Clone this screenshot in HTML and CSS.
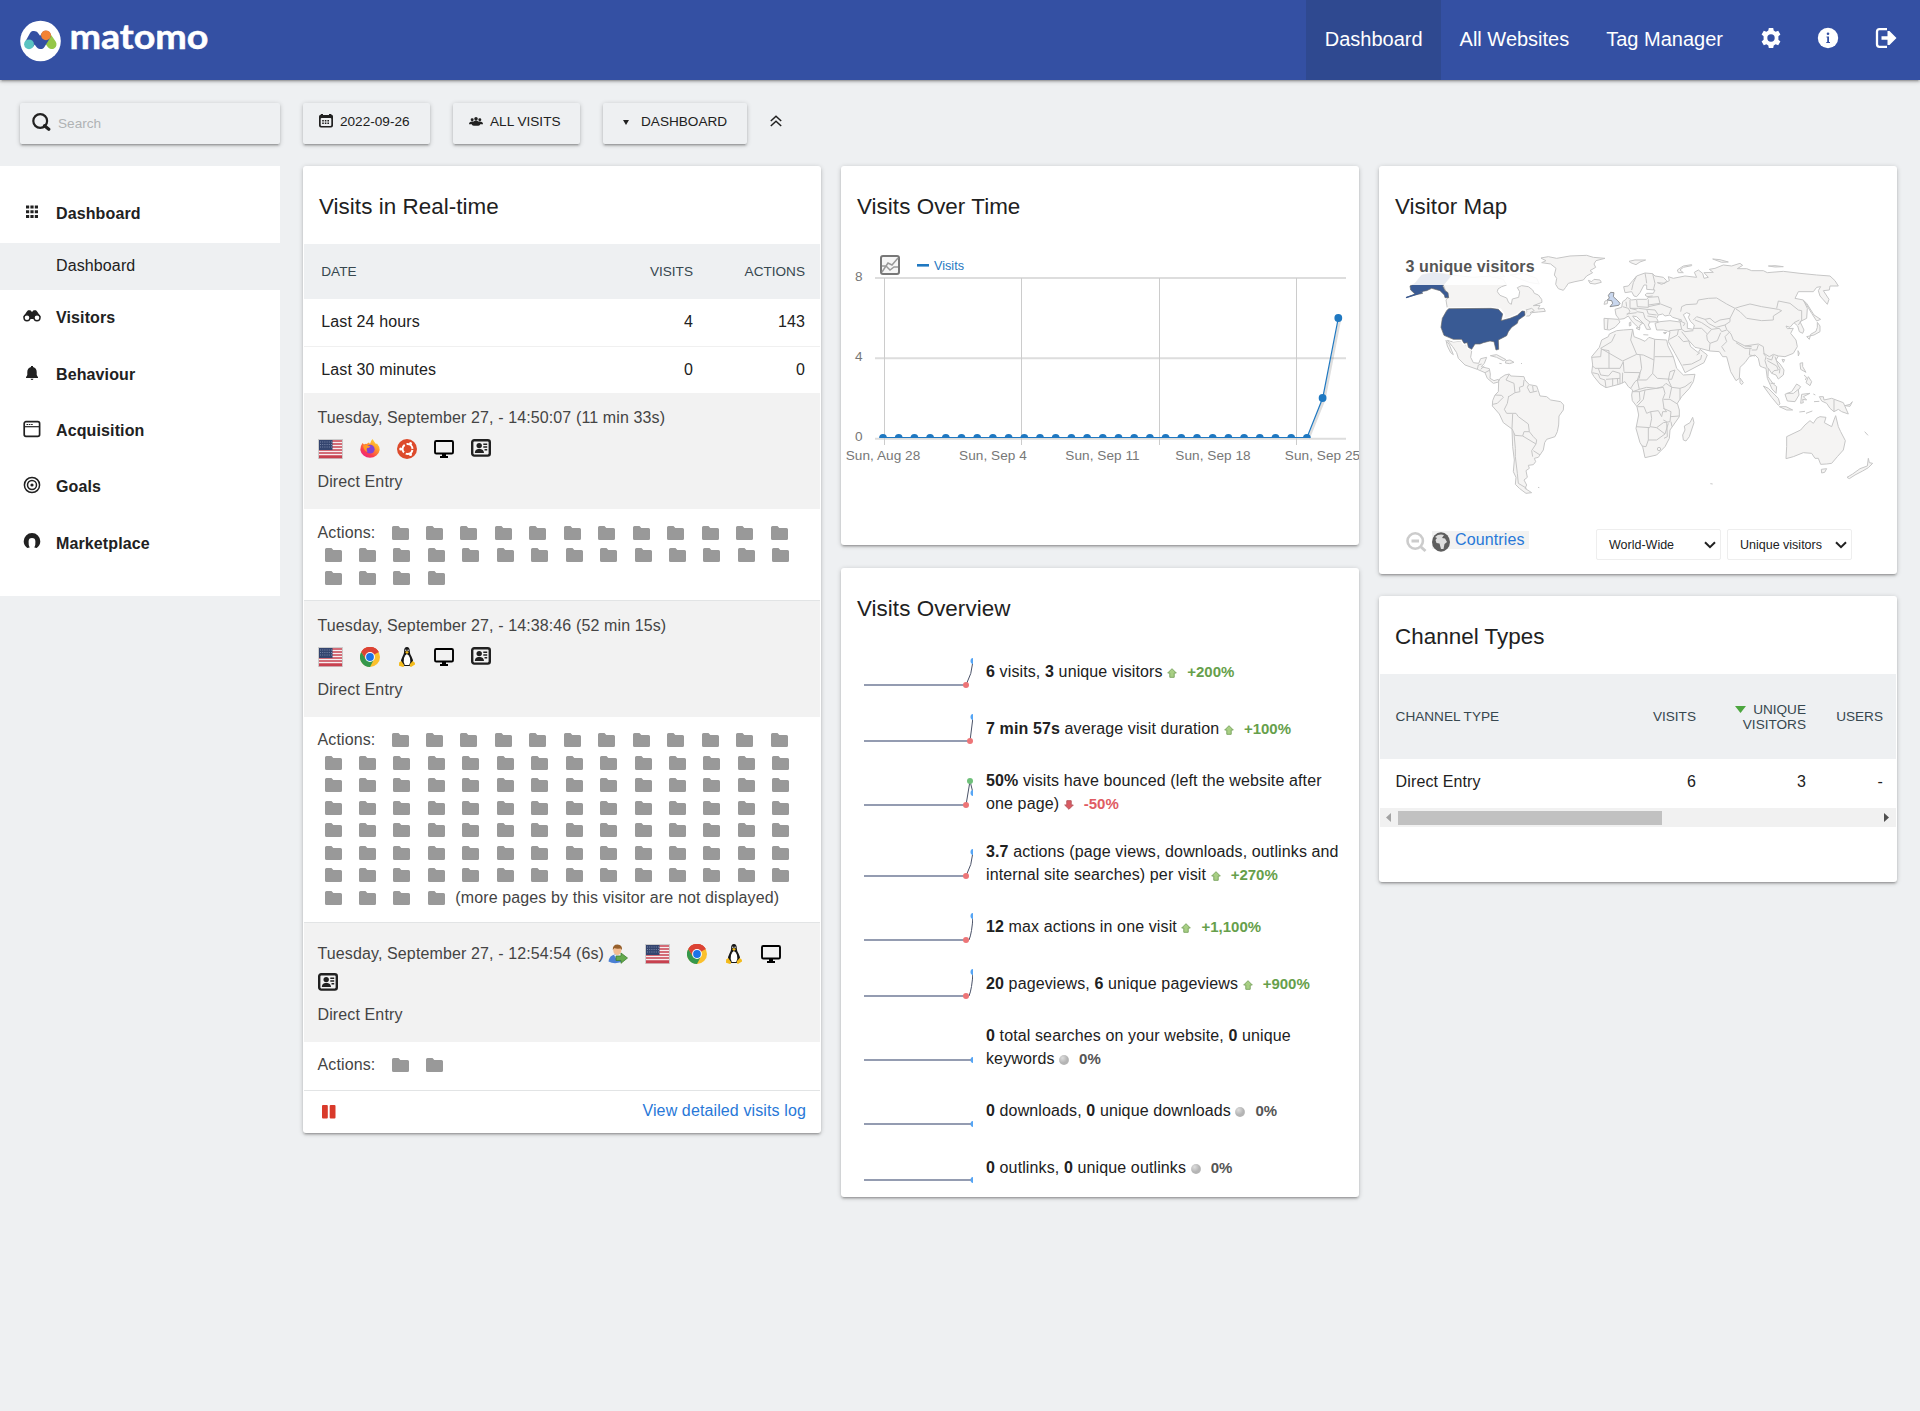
FILE: index.html
```html
<!DOCTYPE html>
<html lang="en">
<head>
<meta charset="utf-8">
<title>Dashboard - Matomo</title>
<link rel="stylesheet" href="styles.css">
</head>
<body>
<svg class="defs" width="0" height="0" aria-hidden="true">
  <defs>
    <linearGradient id="ffx" x1=".9" y1="0" x2=".2" y2="1"><stop offset="0" stop-color="#ffe43a"/><stop offset=".4" stop-color="#ff9a2a"/><stop offset=".75" stop-color="#fb3c50"/><stop offset="1" stop-color="#e8208a"/></linearGradient>
    <radialGradient id="gr" cx=".35" cy=".3"><stop offset="0" stop-color="#ddd"/><stop offset="1" stop-color="#b4b4b4"/></radialGradient>
    <symbol id="i-folder" viewBox="0 0 17 14"><path d="M1.5 0H6.5L8.3 2H15.5Q17 2 17 3.500V12.500Q17 14 15.500 14H1.500Q0 14 0 12.500V1.500Q0 0 1.500 0Z" fill="#999"/></symbol>
    <symbol id="i-flag" viewBox="0 0 25 20"><rect width="25" height="20" fill="#ccc"/><rect x="1" y="1" width="23" height="18" fill="#f7eef0"/><path d="M1 2H24M1 5H24M1 8H24M1 11H24M1 14H24M1 17H24M1 18.500H24" stroke="#c8414f" stroke-width="1.300"/><rect x="1" y="1" width="13.500" height="10" fill="#34456f"/><path d="M2 3H14M2 5.500H14M2 8H14" stroke="#8d99b8" stroke-width=".8" stroke-dasharray="1 1.200"/></symbol>
    <symbol id="i-firefox" viewBox="0 0 20 20"><path d="M2.500 4L4 5.500Q5.500 4.500 7 5Q7.500 3.500 9 3.500L10 5Q10.500 2 12.500 0Q14 2.500 16 5L17 4.500Q20 8 19.700 11A9.800 9 0 0 1 .3 11Q.2 7 2.500 4Z" fill="url(#ffx)"/><circle cx="10.200" cy="10.200" r="4.400" fill="#8243d4"/><path d="M3 6.500Q6 5 10.500 7.500Q9 9 7 9Q6 11 7.500 13Q4 12 3 6.500Z" fill="#ff9a22"/></symbol>
    <symbol id="i-ubuntu" viewBox="0 0 20 20"><circle cx="10" cy="10" r="10" fill="#dd4b2c"/><circle cx="10.500" cy="10" r="5" fill="none" stroke="#fff" stroke-width="2" stroke-dasharray="8.500 2"  stroke-dashoffset="-1"/><circle cx="3.700" cy="10" r="1.500" fill="#fff"/><circle cx="13.500" cy="4.400" r="1.500" fill="#fff"/><circle cx="13.500" cy="15.600" r="1.500" fill="#fff"/></symbol>
    <symbol id="i-chrome" viewBox="0 0 20 20"><circle cx="10" cy="10" r="10" fill="#fbc02d"/><path d="M10 10L1.300 5A10 10 0 0 1 18.700 5Z" fill="#dc4335"/><path d="M10 10L14 12.300L10 20A10 10 0 0 1 1.300 5L6 12.300Z" fill="#35984c"/><path d="M9.500 5.300H18.900L18.700 5A10 10 0 0 0 1.300 5L5.700 12Z" fill="#dc4335"/><circle cx="10" cy="10" r="4.900" fill="#fff"/><circle cx="10" cy="10" r="3.900" fill="#1a73e8"/></symbol>
    <symbol id="i-tux" viewBox="0 0 17 20"><path d="M8.500 0Q5.300 0 5.600 5Q5.500 7 4 9.500Q2 13 2.500 16L6 19H11L14.500 16Q15 13 13 9.500Q11.300 7 11.300 4.500Q11.300 0 8.500 0Z" fill="#161616"/><path d="M8.400 7Q6.500 8 5.500 11Q4.500 15 6.300 18H10.700Q12.500 15 11.500 11Q10.500 8 8.400 7Z" fill="#fff"/><path d="M6.500 5L8.400 4L10.500 5L8.500 7Z" fill="#f3bb1c"/><path d="M.6 15.500L2.800 14L5.500 18Q6 20 4.500 20L.5 18.800ZM16.400 15.800L14.200 14L11.500 17Q11 20 12.500 20L16.500 17.500Z" fill="#f3bb1c"/><circle cx="7.300" cy="3.300" r=".7" fill="#eee"/><circle cx="9.600" cy="3.300" r=".7" fill="#eee"/></symbol>
    <symbol id="i-monitor" viewBox="0 0 20 18"><rect x="1" y="1" width="18" height="12.500" rx="1.300" fill="none" stroke="#000" stroke-width="1.900"/><path d="M8 13H12V16H14V18H6V16H8Z"/></symbol>
    <symbol id="i-card" viewBox="0 0 20 18"><rect x="1.200" y="1.200" width="17.600" height="15.400" rx="2" fill="none" stroke="#212121" stroke-width="2.400"/><circle cx="8.200" cy="6.600" r="2.700" fill="#212121"/><path d="M3.800 14Q4 10.500 7 10H9.500Q12.800 10.500 13 14Z" fill="#212121"/><path d="M12.300 5.200H16.200M12.300 8H16.200M13.500 10.800H16.200" stroke="#212121" stroke-width="1.400"/></symbol>
    <symbol id="i-returning" viewBox="0 0 20 20"><path d="M.5 17.500Q1.500 11 7 10.500Q13 11 13.500 18Q6 20.500 .5 17.500Z" fill="#4a7fd4"/><path d="M6 11L8.500 15L12 11Z" fill="#dfeafa"/><ellipse cx="9.300" cy="6.500" rx="4" ry="4.600" fill="#f2bd92"/><path d="M4.800 6Q4.500 .5 9.500 .5Q14.500 .8 14 6L12.500 4.500Q8 5 6.500 4Z" fill="#97602c"/><path d="M8 12H13V9L19.500 14L13 19.300V16.500H8Z" fill="#63a94c" stroke="#3f8030" stroke-width=".8"/></symbol>
    <symbol id="i-up" viewBox="0 0 10 10"><path d="M5 .7L9.300 5H7.200V9.300H2.800V5H.7Z" fill="#a8cf84" stroke="#7fa865" stroke-width="1"/></symbol>
    <symbol id="i-down" viewBox="0 0 10 10"><path d="M5 9.300L.7 5H2.800V.7H7.200V5H9.300Z" fill="#da5b63" stroke="#b85a60" stroke-width="1"/></symbol>
    <symbol id="i-same" viewBox="0 0 10 10"><circle cx="5" cy="5" r="4.900" fill="url(#gr)"/></symbol>
    <symbol id="i-chev" viewBox="0 0 12 8"><path d="M1 1.200L6 6.200L11 1.200" fill="none" stroke="#212121" stroke-width="2"/></symbol>
  </defs>
</svg>

<header class="header">
  <a class="logo">
    <svg width="200" height="80" viewBox="0 0 200 80">
      <circle cx="20.500" cy="41" r="20.300" fill="#fff"/>
      <path d="M26 36L31.700 44.300" stroke="#95c748" stroke-width="9.600" stroke-linecap="round"/>
      <path d="M10 43L14 35.700L20.500 44.300L26 35.500" fill="none" stroke="#3450a3" stroke-width="9.600" stroke-linecap="round" stroke-linejoin="round"/>
      <circle cx="9" cy="44.300" r="4.900" fill="#5bc4c1"/>
      <circle cx="26" cy="35.300" r="4.900" fill="#f38334"/>
      <text class="wordmark" x="49.500" y="48.600" textLength="139" lengthAdjust="spacingAndGlyphs">matomo</text>
    </svg>
  </a>
  <nav class="topnav">
    <a class="navlink active">Dashboard</a>
    <a class="navlink">All Websites</a>
    <a class="navlink">Tag Manager</a>
    <a class="navicon"><svg width="22" height="22" viewBox="0 0 22 22"><path d="M8.800 1H13.200L13.700 3.600L15.600 4.700L18.200 3.800L20.400 7.500L18.400 9.300V12.700L20.400 14.500L18.200 18.200L15.600 17.300L13.700 18.400L13.200 21H8.800L8.300 18.400L6.400 17.300L3.800 18.200L1.600 14.500L3.600 12.700V9.300L1.600 7.500L3.800 3.800L6.400 4.700L8.300 3.600Z" fill="#fff"/><circle cx="11" cy="11" r="3.700" fill="#3450a3"/></svg></a>
    <a class="navicon"><svg width="22" height="22" viewBox="0 0 22 22"><circle cx="11" cy="11" r="10.200" fill="#fff"/><circle cx="11" cy="6.800" r="1.300" fill="#3450a3"/><path d="M9.500 9.500H12V15H13V16H9.300V15H10.200V10.500H9.500Z" fill="#3450a3"/></svg></a>
    <a class="navicon"><svg width="22" height="22" viewBox="0 0 22 22"><path d="M12 2.200H4.500Q2 2.200 2 4.700V17.300Q2 19.800 4.500 19.800H12" fill="none" stroke="#fff" stroke-width="2.300"/><path d="M6.500 9.300H12.500V4H14.500L21.500 11L14.500 18H12.500V12.700H6.500Z" fill="#fff"/></svg></a>
  </nav>
</header>

<div class="toolbar">
  <div class="search"><svg width="19" height="19" viewBox="0 0 19 19"><circle cx="8.200" cy="8" r="6.900" fill="none" stroke="#212121" stroke-width="2.200"/><path d="M12.500 12.800L16.800 16.300" stroke="#212121" stroke-width="3.200" stroke-linecap="round"/></svg><span>Search</span></div>
  <div class="tool tool-date"><svg width="14" height="15" viewBox="0 0 14 15"><path d="M2 1.500V1H4V2H10V1H12V1.500H12.500Q14 2 14 3.500V12.500Q14 14.500 12 14.500H2Q0 14.500 0 12.500V3.500Q0 2 2 1.500Z" fill="#212121"/><rect x="1.700" y="5" width="10.600" height="8" rx="1" fill="#eef0f2"/><path d="M3.200 7.700H11M3.200 10.300H11" stroke="#212121" stroke-width="1.400" stroke-dasharray="1.600 1"/></svg><span>2022-09-26</span></div>
  <div class="tool"><svg width="14" height="11" viewBox="0 0 15 11"><circle cx="3.400" cy="3.500" r="1.600"/><circle cx="11.600" cy="3.500" r="1.600"/><circle cx="7.500" cy="2.500" r="1.900"/><path d="M0 8.500Q0 5.500 3.500 5.500H5L6.500 4.500H8.500L10 5.500H11.500Q15 5.500 15 8.500H12Q12 10 10 10H5Q3 10 3 8.500Z"/></svg><span>ALL VISITS</span></div>
  <div class="tool tool-dash"><svg width="6" height="5" viewBox="0 0 6 5"><path d="M0 0H6L3 5Z"/></svg><span>DASHBOARD</span></div>
  <svg class="collapse" width="12" height="12" viewBox="0 0 12 12"><path d="M.8 6L6 1.200L11.200 6M.8 11L6 6.200L11.200 11" fill="none" stroke="#212121" stroke-width="1.500"/></svg>
</div>

<div class="page">
  <aside class="sidebar">
    <a class="item first"><svg width="18" height="18" viewBox="0 0 18 18"><path d="M3 4H15M3 8.700H15M3 13.400H15" stroke="#212121" stroke-width="3" stroke-dasharray="3.200 1.200"/></svg>Dashboard</a>
    <a class="sub">Dashboard</a>
    <a class="item"><svg width="18" height="18" viewBox="0 0 18 18"><path d="M3.500 5L5 3.200H7.500L8.200 4.500H9.800L10.500 3.200H13L14.500 5L17.700 10L14 14L11 12H7L4 14L.3 10Z" fill="#212121"/><circle cx="4" cy="10.700" r="3" fill="#fff" stroke="#212121" stroke-width="1.400"/><circle cx="14" cy="10.700" r="3" fill="#fff" stroke="#212121" stroke-width="1.400"/></svg>Visitors</a>
    <a class="item"><svg width="18" height="18" viewBox="0 0 18 18"><path d="M8 3V2H10V3Q13.700 4 13.700 8V11L15 13.300V14H3V13.300L4.300 11V8Q4.300 4 8 3ZM7.500 14.800H10.500Q10 16 9 16Q8 16 7.500 14.800Z" fill="#212121"/></svg>Behaviour</a>
    <a class="item"><svg width="18" height="18" viewBox="0 0 18 18"><rect x="1.200" y="1.700" width="15.400" height="14.600" rx="1.800" fill="none" stroke="#212121" stroke-width="1.700"/><path d="M1 6.700H17" stroke="#212121" stroke-width="1.200"/><path d="M3.500 4.500H10" stroke="#212121" stroke-width="1.100" stroke-dasharray="1.600 .7"/></svg>Acquisition</a>
    <a class="item"><svg width="18" height="18" viewBox="0 0 18 18"><g fill="none" stroke="#212121" stroke-width="1.500"><circle cx="9" cy="9" r="7.600"/><circle cx="9" cy="9" r="4.500"/></g><circle cx="9" cy="9" r="1.600" fill="#212121"/></svg>Goals</a>
    <a class="item"><svg width="18" height="18" viewBox="0 0 18 18"><path d="M4.300 16Q.7 13.500 .7 9.300A8.300 8.300 0 0 1 17.300 9.300Q17.300 13.500 13.700 16L11.300 15.500Q12.700 13 12.400 9.500A3.400 3.400 0 0 0 5.600 9.500Q5.300 13 6.700 15.500Z" fill="#212121"/></svg>Marketplace</a>
  </aside>

  <main class="widgets">
    <div class="column">
      <section class="card">
        <h2>Visits in Real-time</h2>
        <div class="inner">
          <table class="rt">
            <thead><tr><th>DATE</th><th>VISITS</th><th>ACTIONS</th></tr></thead>
            <tbody><tr><td>Last 24 hours</td><td>4</td><td>143</td></tr><tr><td>Last 30 minutes</td><td>0</td><td>0</td></tr></tbody>
          </table>
          <div class="visit">
            <div>Tuesday, September 27, - 14:50:07 (11 min 33s)</div>
            <div class="icons"><svg class="flag"><use href="#i-flag"/></svg><svg class="ic"><use href="#i-firefox"/></svg><svg class="ic"><use href="#i-ubuntu"/></svg><svg class="mon"><use href="#i-monitor"/></svg><svg class="mon id"><use href="#i-card"/></svg></div>
            <div>Direct Entry</div>
          </div>
          <div class="actions" data-folders="30">Actions:&nbsp; </div>
          <div class="visit second">
            <div>Tuesday, September 27, - 14:38:46 (52 min 15s)</div>
            <div class="icons"><svg class="flag"><use href="#i-flag"/></svg><svg class="ic"><use href="#i-chrome"/></svg><svg class="ic"><use href="#i-tux"/></svg><svg class="mon"><use href="#i-monitor"/></svg><svg class="mon id"><use href="#i-card"/></svg></div>
            <div>Direct Entry</div>
          </div>
          <div class="actions long" data-folders="100" data-note="(more pages by this visitor are not displayed)">Actions:&nbsp; </div>
          <div class="visit third">
            <div class="icons"><span>Tuesday, September 27, - 12:54:54 (6s)</span><svg class="ic ret"><use href="#i-returning"/></svg><svg class="flag"><use href="#i-flag"/></svg><svg class="ic"><use href="#i-chrome"/></svg><svg class="ic"><use href="#i-tux"/></svg><svg class="mon"><use href="#i-monitor"/></svg></div>
            <div class="icons"><svg class="mon"><use href="#i-card"/></svg></div>
            <div>Direct Entry</div>
          </div>
          <div class="actions last" data-folders="2">Actions:&nbsp; </div>
          <div class="foot"><svg width="14" height="14" viewBox="0 0 14 14"><rect width="5.800" height="13.500" rx="1" fill="#d93a2b"/><rect x="7.700" width="5.800" height="13.500" rx="1" fill="#d93a2b"/></svg><a>View detailed visits log</a></div>
        </div>
      </section>
    </div>

    <div class="column">
      <section class="card">
        <h2>Visits Over Time</h2>
        <svg class="chart" id="chart" width="518" height="301" viewBox="841 244 518 301">
          <rect x="881" y="256" width="18" height="18" rx="2" fill="#f6f6f6" stroke="#777" stroke-width="2"/>
          <path d="M882 272L888 263L892 265L898 258M882 266L886 266L890 270L894 267L898 267" fill="none" stroke="#999" stroke-width="1.500"/>
          <path d="M917 265.300H929" stroke="#1f78c1" stroke-width="2.600"/>
          <text class="legend" x="934" y="270.300" textLength="30" lengthAdjust="spacingAndGlyphs">Visits</text>
          <path d="M875 278H1346M875 358.300H1346M875 438.800H1346" stroke="#ddd" stroke-width="2"/>
          <path d="M884.500 278V445M1021.500 278V445M1159.500 278V445M1296.500 278V445" stroke="#ccc"/>
          <g class="axis" text-anchor="end"><text x="862.500" y="281">8</text><text x="862.500" y="361.300">4</text><text x="862.500" y="441.300">0</text></g>
          <g class="axis" text-anchor="middle"><text x="883" y="460">Sun, Aug 28</text><text x="993" y="460">Sun, Sep 4</text><text x="1102.500" y="460">Sun, Sep 11</text><text x="1213" y="460">Sun, Sep 18</text><text x="1322.500" y="460">Sun, Sep 25</text></g>
          <path d="M1308.500 438L1324 399.500L1339.700 319.500" fill="none" stroke="#000" stroke-opacity=".13" stroke-width="3"/>
          <path d="M883 437.500H1307L1322.700 398L1338.300 318" fill="none" stroke="#1f78c1" stroke-width="1.200"/>
        </svg>
      </section>
      <section class="card overview">
        <h2>Visits Overview</h2>
        <div class="rows">
          <div class="row" data-spark="s6"><p><b>6</b> visits, <b>3</b> unique visitors <svg class="ev"><use href="#i-up"/></svg><b class="up">+200%</b></p></div>
          <div class="row" data-spark="s7"><p><b>7 min 57s</b> average visit duration <svg class="ev"><use href="#i-up"/></svg><b class="up">+100%</b></p></div>
          <div class="row two" data-spark="bounce"><p><b>50%</b> visits have bounced (left the website after one page) <svg class="ev"><use href="#i-down"/></svg><b class="down">-50%</b></p></div>
          <div class="row two" data-spark="s6"><p><b>3.7</b> actions (page views, downloads, outlinks and internal site searches) per visit <svg class="ev"><use href="#i-up"/></svg><b class="up">+270%</b></p></div>
          <div class="row" data-spark="steep"><p><b>12</b> max actions in one visit <svg class="ev"><use href="#i-up"/></svg><b class="up">+1,100%</b></p></div>
          <div class="row" data-spark="steep"><p><b>20</b> pageviews, <b>6</b> unique pageviews <svg class="ev"><use href="#i-up"/></svg><b class="up">+900%</b></p></div>
          <div class="row two" data-spark="flat"><p><b>0</b> total searches on your website, <b>0</b> unique keywords <svg class="ev"><use href="#i-same"/></svg><b class="same">0%</b></p></div>
          <div class="row" data-spark="flat"><p><b>0</b> downloads, <b>0</b> unique downloads <svg class="ev"><use href="#i-same"/></svg><b class="same">0%</b></p></div>
          <div class="row" data-spark="flat"><p><b>0</b> outlinks, <b>0</b> unique outlinks <svg class="ev"><use href="#i-same"/></svg><b class="same">0%</b></p></div>
        </div>
      </section>
    </div>

    <div class="column">
      <section class="card mapcard">
        <h2>Visitor Map</h2>
        <svg class="map" width="518" height="285" viewBox="1379 244 518 285">
          <g transform="translate(1390 240) scale(.33333)" fill="#f5f4f3" stroke="#c6c6c6" stroke-width="3" stroke-linejoin="round">
            <path d="M452 54L475 50 500 55 540 48 590 46 610 52 645 55 618 62 612 72 617 82 600 92 608 98 590 108 580 120 555 125 535 130 527 142 520 151 505 146 497 133 500 115 493 105 498 85 482 72 455 68 468 62z"/>
            <path d="M595 121L605 125 612 118 630 120 634 127 615 132 600 130zM717 64L735 60 767 60 750 66 738 74 722 68z"/>
            <path d="M172 205L168 180 175 172 160 135 185 105 250 112 300 108 340 118 350 135 335 140 324 147 322 155 330 166 350 174 356 188 364 193 367 177 386 172 389 155 382 143 395 137 415 140 428 150 433 160 445 165 455 178 456 187 430 197 450 196 444 207 462 205 466 214 445 216 425 218 418 228 405 228 412 210 398 213 385 228 360 235 332 242 338 225 330 210 303 205z"/>
            <path d="M360 105L400 100 440 115 448 132 420 128zM290 98L330 95 345 110 305 112zM408 210L425 205 433 212 420 218"/>
            <path d="M172 301L190 306 215 303 230 318 245 333 242 352 250 368 266 370 272 356 290 352 283 370 274 380 298 386 301 402 300 415 312 422 325 418 326 426 310 430 292 415 285 398 262 388 225 375 205 355 200 338 188 320zM168 301L178 314 190 344 182 338 172 318zM262 388L265 375 275 372M272 388L283 378M285 398L300 390"/>
            <path d="M301 347L320 344 348 359 340 362 320 352zM348 362L360 360 372 367 358 371 346 369zM328 370L335 371M393 370L396 371"/>
            <path d="M326 425L330 415 345 405 358 402 362 408 402 410 405 420 418 434 440 438 445 452 450 468 470 470 482 480 512 485 521 495 520 510 507 528 506 555 502 575 495 590 470 598 464 608 460 630 445 652 433 655 437 665 430 674 415 676 418 685 408 692 412 712 402 720 410 735 405 745 425 758 408 760 388 745 376 733 378 712 370 695 373 660 368 620 366 567 340 548 328 522 307 498 308 482 315 465 325 455z"/>
            <path fill="none" d="M372 580L376 625 376 650 382 700 385 730 410 745M358 402L348 420 372 430 375 458 M356 468L352 490 343 508 350 520 378 520 385 530 415 552 418 575 402 575 398 588 375 586 366 566 368 522M402 420L400 438 388 442 390 455 375 458 356 470M416 434L412 442 420 458 442 453M428 438L430 455M315 465L335 466 340 472 322 490 308 493M398 588L438 612 440 600 430 590 418 575M438 612L425 632 428 650M430 632L450 645"/>
            <path d="M444 742L448 743M645 183L653 181 652 191 642 193z"/>
            <path d="M658 282L680 272 700 270 728 268 732 290 750 297 765 304 777 292 795 298 830 300 834 318 850 350 860 385 880 405 915 403 910 425 898 445 875 470 862 490 868 510 868 530 840 570 838 595 825 620 800 645 765 653 758 620 750 608 738 565 746 525 741 500 727 482 725 465 728 450 715 440 705 425 690 432 668 438 648 443 630 432 612 410 605 398 608 375 605 350 628 322 635 300 655 290z"/>
            <path fill="none" d="M676 282L665 305 632 325 698 363 740 343 722 300 728 268M605 352L632 350 634 328 657 332 657 385 615 385 608 378M740 343L760 345 792 360 794 298M794 350L850 350M657 385L690 385 700 365 702 395M750 345L755 385 742 420 748 448 728 455M702 397L750 398 748 415 735 425 722 445M607 398L625 402 630 415 645 420 648 443M625 385L632 405 655 408 668 393 690 400 690 432M668 415L668 438M648 418L690 415M682 415L684 435M697 430L698 398M792 360L788 400 802 415 845 418 855 390M742 420L770 420 788 400M748 448L770 442 800 445 818 440 828 430 845 442 870 445 885 440 905 425M855 390L840 395 835 420 845 442M728 455L748 455 750 480 740 490M748 455L765 450 760 478 740 500M765 450L820 442 825 460 818 478 822 505 830 515 818 515 815 530 805 512 782 515M743 500L762 500 770 520 782 515 785 535 780 560 800 563 820 548 840 545 843 515 820 505M738 560L780 563M775 563L775 600 768 620 755 618M775 600L800 600 825 582 800 563M825 582L835 550M820 478L840 478 862 492M845 442L838 475M870 445L870 478M842 530L868 528M820 540L830 545 832 590 822 595M843 545L846 560"/>
            <circle cx="807" cy="627" r="5"/>
            <path d="M908 532L912 548 898 590 888 603 880 600 878 585 885 570 883 558 900 548z"/>
          </g>
          <g transform="translate(1630 240) scale(.33333)" fill="#f5f4f3" stroke="#c6c6c6" stroke-width="3" stroke-linejoin="round">
            <path d="M-19 140L-5 138 8 122 20 108 45 99 68 101 75 108 100 112 110 122 105 130 82 128 95 133 118 122 115 110 130 115 165 108 200 112 193 97 205 90 218 100 222 115 235 112 222 98 250 97 238 88 255 85 280 75 305 78 330 70 338 76 322 86 350 86 365 92 400 92 412 98 460 94 510 100 560 105 600 108 615 122 625 138 600 138 598 150 580 152 597 178 592 193 570 168 565 152 572 140 560 142 550 155 505 155 495 175 520 180 532 205 530 235 510 245 522 270 518 280 508 275 503 258 492 248 480 262 468 258 472 266 490 265 482 280 498 300 502 320 490 340 465 350 445 348 438 360 450 372 462 390 460 405 445 417 438 405 425 400 415 385 414 410 430 432 440 440 438 460 426 447 412 415 408 385 398 382 390 378 385 355 375 345 358 350 345 368 330 382 328 415 318 422 302 395 290 350 278 350 268 335 240 333 210 325 195 322 175 300 182 320 205 338 210 328 232 345 222 368 165 398 157 380 135 340 115 305 120 275 100 270 80 270 75 250 90 245 120 242 150 246 155 240 128 232 120 225 105 228 98 222 85 225 80 235 85 245 60 246 55 255 62 268 50 268 42 252 20 230 8 228 15 238 38 250 30 255 28 265 20 258 5 243 -5 228 -18 236 -32 238 -42 225 -45 208 -25 202 -22 185 -12 178 -8 172 5 180 20 178 50 178 55 172 45 165 50 160 70 160 75 150 50 148 50 135 42 135 30 158 20 170 12 168 5 155 -15 158z"/>
            <path d="M-78 235L-35 238 -30 246 -45 262 -62 270 -77 268zM-66 237L-68 268M-2 248L2 246 3 256-2 258zM18 264L30 262 28 270zM100 278L110 277 105 282zM40 284L55 285"/>
            <path fill="none" d="M20 108L10 128 5 150M45 99L48 115 50 130M68 101L75 130 70 150M-22 200L-5 205 0 215-10 225M0 180L0 205 20 210M20 180L22 200 55 202 55 178M55 172L85 170 90 190 55 195M55 200L92 192 125 205 118 222M0 205L25 205 50 208 55 222 80 225M50 208L75 210 85 225M20 215L40 218 45 235M-10 222L20 218M52 228L78 232M45 235L60 246M-12 185L-10 200M50 170L68 168M152 215L155 200 168 194 200 192 205 180 235 175 260 174 290 192 315 205 300 235 270 240 255 248 240 235 225 238 200 230 190 240M315 205L330 200 360 192 395 200 445 208 455 212 430 228 430 240 395 242 350 235 330 215 318 207M440 205L445 183 480 190 505 210 515 212 515 240 505 255M300 235L300 245 285 255 290 268 303 282 310 300 345 318 385 312 400 320 402 340 418 350 430 343 445 348M300 275L285 290 290 305 275 320 285 335M230 285L245 268 268 265 275 275 290 270M230 285L232 300 240 310 238 332M240 310L262 302 272 278M190 265L215 265 232 282M195 240L215 248 245 268M225 238L235 250 258 262 285 255M118 272L155 268 165 275 190 272M155 268L150 245M145 240L165 250 160 258M145 270L142 285 118 298M145 288L160 305 175 303M155 275L175 300M158 375L185 372 212 358 215 345M210 338L200 345M318 308L345 325 365 325M345 318L365 320M360 325L358 345 375 348M365 330L380 330 385 315M400 340L408 350 405 362 412 385M410 355L425 360 430 345M412 362L440 378 445 390 432 392 425 400M435 350L445 378 450 385 448 400M422 430L435 430M492 248L508 240"/>
            <path fill="#fff" d="M160 224L170 218 180 222 175 232 182 245 193 255 190 268 172 265 172 248z"/>
            <path d="M185 74L160 78 142 90 145 98 160 98 150 90 160 82 185 77zM248 57L270 59 295 66 275 67zM415 78L435 77 460 80 435 81zM520 181L530 190 552 225 572 238 560 243 545 220 530 195zM562 247L570 258 570 275 552 285 530 290 538 298 542 283 558 274 562 262zM504 332L508 340 505 348zM456 358L464 359 460 367zM330 414L340 428 335 434 330 428zM510 370L518 368 518 380 528 397 512 388zM535 410L545 425 540 437 528 428zM522 405L530 412 526 420M400 438L415 445 445 475 450 492 445 496 425 472zM448 500L468 500 488 510 470 510zM465 463L485 455 500 432 512 440 505 450 507 465 495 485 472 483zM470 460L490 460 505 448M515 463L540 460 520 470 530 480 518 478 520 488 512 490zM508 516L525 514M528 520L547 513M550 462L556 465M552 485L568 484M568 470L580 470 582 480 605 475 640 488 655 522 635 515 625 508 612 515 600 505 590 490 575 483zM612 480V515M645 497L660 493 667 485 660 499zM704 575L714 586"/>
            <path d="M470 590L495 578 512 570 525 555 540 542 550 550 560 535 570 530 588 532 583 548 605 560 612 540 617 527 625 560 632 575 646 602 640 630 622 650 605 670 590 672 572 673 565 655 555 655 545 640 520 638 490 650 468 656 470 620z"/>
            <path d="M574 688L590 686 584 697 575 699zM715 655L718 668 728 670 715 683 698 693 675 705 658 716 651 712 668 702 690 686 712 678zM241 731L248 732"/>
          </g>
          <g transform="translate(1390 240) scale(.33333)" stroke="#666" stroke-width="2" stroke-linejoin="round">
            <path d="M172 207L303 205 330 210 340 225 335 242 360 235 382 225 398 213 404 214 405 226 385 240 382 250 362 262 355 275 353 285 326 300 326 328 318 330 312 305 300 303 280 308 270 312 255 312 247 328 235 322 232 308 222 310 215 298 190 300 160 287 152 262 157 235z" fill="none" stroke="#fff" stroke-width="10"/>
            <path d="M176 206L303 205 325 208 338 222 333 242 360 235 382 226 396 213 404 214 405 226 385 240 382 250 365 262 355 275 350 287 325 300 326 328 318 330 312 305 300 303 280 308 270 312 255 312 245 328 235 322 232 308 222 310 215 298 190 298 162 286 153 262 157 235 170 212z" fill="#395a94"/>
            <path d="M62 150L60 138 75 130 95 105 130 97 185 105 158 138 165 152 174 158 176 173 165 173 163 165 150 152 125 145 110 152 92 155 98 160 75 165 48 173 75 162z" fill="#395a94"/>
            <path d="M48 173L78 163 98 155" fill="none" stroke="#395a94" stroke-width="4"/>
            <path d="M662 157L672 158 670 170 683 182 690 190 686 196 660 200 668 190 665 182 652 180 658 174 655 166z" fill="#c9d7ee"/>
          </g>
          <rect x="1399" y="250" width="142" height="35" fill="#fff" fill-opacity=".88"/>
          <text class="mapinfo" x="1405.500" y="272.300">3 unique visitors</text>
        </svg>
        <div class="mapfoot">
          <svg width="21" height="22" viewBox="0 0 21 22"><circle cx="9.200" cy="10" r="7.700" fill="none" stroke="#ccc" stroke-width="2.600"/><path d="M5.500 10H13M15 16L19.500 20" stroke="#ccc" stroke-width="3"/></svg>
          <a class="countries"><svg width="18" height="20" viewBox="0 0 18 20"><ellipse cx="9" cy="10" rx="9" ry="9.700" fill="#5e5e5e"/><path d="M3 5Q7 1.500 12 3L10 6L13 6.500L15 10L12.500 12L11.500 17L9 17L7.500 11.500L4.500 11L3.500 8L5 6Z" fill="#ddd"/></svg>Countries</a>
          <div class="select">World-Wide<svg width="12" height="8"><use href="#i-chev"/></svg></div>
          <div class="select">Unique visitors<svg width="12" height="8"><use href="#i-chev"/></svg></div>
        </div>
      </section>
      <section class="card channels">
        <h2>Channel Types</h2>
        <div class="inner">
          <table class="ch">
            <thead><tr><th>CHANNEL TYPE</th><th>VISITS</th><th><svg width="11" height="7" viewBox="0 0 11 7"><path d="M0 0H11L5.500 7Z" fill="#4ca63f"/></svg>UNIQUE VISITORS</th><th>USERS</th></tr></thead>
            <tbody><tr><td>Direct Entry</td><td>6</td><td>3</td><td>-</td></tr></tbody>
          </table>
          <div class="scroll"><svg width="5" height="9" viewBox="0 0 5 9"><path d="M5 0V9L0 4.500Z" fill="#a3a3a3"/></svg><span class="thumb"></span><svg width="5" height="9" viewBox="0 0 5 9"><path d="M0 0V9L5 4.500Z" fill="#505050"/></svg></div>
        </div>
      </section>
    </div>
  </main>
</div>
<script src="script.js"></script>
</body>
</html>
```
FILE: styles.css
```css
* { box-sizing: border-box; }
body { margin: 0; min-height: 1411px; background: #eef0f2; color: #212121; font: 16px/22.55px "Liberation Sans", Arial, sans-serif; }
.defs { position: absolute; }
svg { display: block; flex: none; }
h2 { margin: 0; height: 78px; padding: 2px 16px 0; font-size: 22.4px; font-weight: 400; letter-spacing: .05px; line-height: 78px; }

.header { display: flex; justify-content: space-between; height: 80px; padding-left: 20px; background: #3450a3; box-shadow: 0 2px 2px 0 rgba(0,0,0,.14), 0 3px 1px -2px rgba(0,0,0,.12), 0 1px 5px 0 rgba(0,0,0,.2); }
.wordmark { font-family: Lato, sans-serif; font-weight: 700; font-size: 35px; fill: #fff; stroke: #fff; stroke-width: .5px; stroke-linejoin: round; }
.topnav { display: flex; padding-right: 6px; color: #fff; font-size: 20px; line-height: 78px; }
.navlink { padding: 0 18.500px; }
.navlink.active { background: #2f4990; }
.navicon { width: 57.500px; padding: 27px 0 0 18px; }

.toolbar { display: flex; padding: 23px 0 22px 20px; font-size: 13.600px; line-height: 38.500px; }
.search, .tool { display: flex; height: 41px; border-radius: 2px; background: #eef0f2; box-shadow: 0 2px 2px 0 rgba(0,0,0,.14), 0 3px 1px -2px rgba(0,0,0,.12), 0 1px 5px 0 rgba(0,0,0,.2); }
.search { width: 260px; margin-right: 23px; padding-left: 12px; gap: 7px; color: #b0b3b5; line-height: 41px; }
.search svg { margin-top: 10px; }
.tool { width: 127px; margin-right: 23px; padding-left: 16px; gap: 7px; }
.tool svg { margin-top: 13px; fill: #212121; }
.tool-date svg { margin-top: 10px; }
.tool-dash { width: 144px; padding-left: 20px; gap: 12px; }
.tool-dash svg { margin-top: 17px; }
.collapse { margin: 12px 0 0; }

.page { display: flex; align-items: flex-start; gap: 23px; letter-spacing: .12px; }
.sidebar { display: flex; flex-direction: column; width: 280px; height: 430px; padding-top: 20px; background: #fff; font-weight: 700; }
.item { display: flex; align-items: center; gap: 15px; height: 56.300px; padding-left: 23px; }
.item svg { margin-bottom: 5px; }
.item.first { height: 57px; }
.sub { height: 47px; margin-bottom: .6px; padding-left: 56px; background: #eef0f2; font-weight: 400; line-height: 45px; }

.widgets { display: grid; grid-template-columns: repeat(3, 518px); gap: 20px; align-items: start; }
.column { display: flex; flex-direction: column; gap: 22px; }
.card { border-radius: 3px; background: #fff; box-shadow: 0 2px 2px 0 rgba(0,0,0,.14), 0 3px 1px -2px rgba(0,0,0,.12), 0 1px 5px 0 rgba(0,0,0,.2); }
.inner { padding: 0 1px; }

table { width: 100%; border-collapse: collapse; table-layout: fixed; }
th { background: #eef0f2; color: #37474f; font-size: 13.600px; font-weight: 400; line-height: 15px; text-align: right; letter-spacing: 0; }
td { text-align: right; }
th:first-child, td:first-child { text-align: left; }
.rt th { height: 55px; padding: 0 15px 0 17.300px; }
.rt td { height: 47px; padding: 0 15px 0 17.300px; }
.rt tbody tr:first-child td { border-bottom: 1px solid #f0f0f0; }
.rt tbody tr:last-child td { padding-top: 2px; }
.rt th:nth-child(1) { width: 290px; }
.rt th:nth-child(2) { width: 114px; }

.visit { height: 116px; padding: 14px 13.500px 0; background: #f2f2f2; color: #444; }
.visit.second { height: 116.200px; border-top: 1px solid #e2e4e5; }
.icons { display: flex; align-items: center; gap: 17px; height: 20px; margin: 9px 0 12px; }
.flag { width: 25px; height: 20px; }
.ic { width: 20px; height: 20px; }
.mon { width: 20px; height: 18px; }
.mon.id { margin: 0 0 1px .5px; }
.visit.third { height: 120px; padding-top: 21px; border-top: 1px solid #e2e4e5; }
.third .icons { margin: 0 0 8px; }
.third .icons + .icons { margin-bottom: 12px; }
.third .ret { margin-left: -13px; }
.actions { padding: 12.600px 13.500px 11.200px; color: #444; }
.actions.long { padding-bottom: 12.200px; }
.actions i { display: inline-block; width: 29.880px; height: 14px; padding-left: 7px; vertical-align: -2px; }
.actions i svg { width: 17px; height: 14px; }
.actions.last { height: 49px; border-bottom: 1px solid #e2e4e5; }
.foot { display: flex; justify-content: space-between; align-items: center; height: 42px; padding: 0 14px 0 18px; color: #2878d8; }

.legend { font-size: 13px; fill: #1f78c1; letter-spacing: 0; }
.axis { font-size: 13.600px; fill: #777; letter-spacing: .05px; }
.chart { overflow: hidden; }
.overview { height: 629px; margin-top: 1px; }
.rows { margin-top: -2px; }
.row { display: flex; align-items: center; height: 56.350px; padding-left: 23px; }
.row.two { height: 71.200px; }
.row p { width: 356px; margin: 0 0 0 13px; padding-top: 1px; }
.spark { width: 109px; height: 36px; margin-top: -1px; }
.ev { display: inline-block; width: 10px; height: 10px; margin-right: 10px; vertical-align: -1px; }
.up, .down, .same { font-size: 15px; letter-spacing: 0; }
.up { color: #669f4b; }
.down { color: #e05b63; }
.same { color: #555; }

.mapcard { height: 408px; }
.mapinfo { font-size: 16px; font-weight: 700; fill: #555; }
.mapfoot { display: flex; padding-left: 27px; }
.mapfoot > svg { margin: 2px 5px 0 0; }
.countries { display: flex; gap: 5px; width: 97px; height: 18px; margin: 2px 67px 0 0; background: #f2f2f2; color: #2878d8; line-height: 18px; }
.countries svg { margin-top: 1px; }
.select { display: flex; justify-content: space-between; align-items: center; width: 125px; height: 31px; margin-right: 6px; padding: 1px 4px 0 12px; border: 1px solid #eee; border-radius: 2px; font-size: 12.500px; letter-spacing: 0; }
.channels { height: 286px; }
.ch th { height: 85px; padding: 0 13px 0 15.600px; }
.ch td { height: 49px; padding: 0 13px 3px 15.600px; }
.ch th:nth-child(1) { width: 244px; }
.ch th:nth-child(2) { width: 85px; }
.ch th:nth-child(3) { width: 110px; }
.ch th svg { display: inline-block; margin-right: 7px; vertical-align: 1px; }
.scroll { display: flex; align-items: center; height: 19px; padding: 0 7px 0 6px; background: #f1f1f1; }
.thumb { width: 264px; height: 14px; margin: 0 auto 0 7px; background: #c1c1c1; }
```
FILE: script.js
```js
// Page-view folders of each visit
document.querySelectorAll('.actions').forEach(function (el) {
  var folder = '<i><svg><use href="#i-folder"/></svg></i> ';
  el.innerHTML += folder.repeat(+el.dataset.folders) + (el.dataset.note || '');
});

// Daily points of the evolution graph, clipped at the axis
var pts = '<clipPath id="plot"><rect x="870" y="270" width="480" height="168"/></clipPath><g clip-path="url(#plot)" fill="#1f78c1">';
for (var d = 0; d < 30; d++) {
  var v = d === 29 ? 6 : d === 28 ? 2 : 0;
  pts += '<circle cx="' + (883 + d * 15.7) + '" cy="' + (438 - v * 20) + '" r="3.9"/>';
}
document.getElementById('chart').innerHTML += pts + '</g>';

// Sparklines
var shapes = {
  s6: { line: 'M0 31H102Q108 20 109 7', red: 102, top: 7 },
  s7: { line: 'M0 31H106L109 7', red: 106, top: 7 },
  steep: { line: 'M0 31H105Q108 24 109 7', red: 102, top: 7 },
  bounce: { line: 'M0 31H102L106 7L109 19', red: 102, green: 106, top: 19 },
  flat: { line: 'M0 31H109', top: 31 }
};
document.querySelectorAll('.row').forEach(function (row) {
  var s = shapes[row.dataset.spark];
  var h = '<svg class="spark" viewBox="0 0 109 36"><path d="' + s.line + '" fill="none" stroke="#4a5268" stroke-width="1"/>' +
    '<path d="M0 31H' + (s.red || 107) + '" stroke="#8f99b0" stroke-width="1.6"/>';
  if (s.red) h += '<circle cx="' + s.red + '" cy="31" r="3" fill="#ed7577"/>';
  if (s.green) h += '<circle cx="' + s.green + '" cy="7" r="3" fill="#6fc07a"/>';
  h += '<circle cx="109.500" cy="' + s.top + '" r="3" fill="#55a5f5"/></svg>';
  row.insertAdjacentHTML('afterbegin', h);
});
```
